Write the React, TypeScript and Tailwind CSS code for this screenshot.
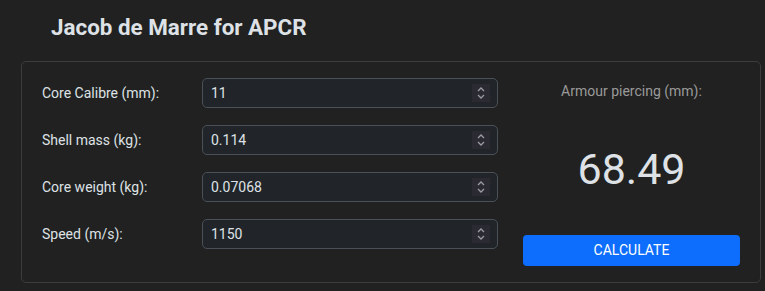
import React from "react";

const fields = [
  { label: "Core Calibre (mm):", value: "11" },
  { label: "Shell mass (kg):", value: "0.114" },
  { label: "Core weight (kg):", value: "0.07068" },
  { label: "Speed (m/s):", value: "1150" },
];

function Spinner() {
  return (
    <div className="w-[18px] h-[18px] bg-[#2b2a33] flex items-center justify-center">
      <svg width="10" height="14" viewBox="0 0 10 14" fill="none" stroke="#9b9ba1" strokeWidth="1.3">
        <path d="M2 5 L5 2 L8 5" />
        <path d="M2 9 L5 12 L8 9" />
      </svg>
    </div>
  );
}

export default function App() {
  return (
    <div
      className="w-[765px] h-[291px] bg-[#212121] text-[#dee2e6] overflow-hidden"
      style={{ fontFamily: "Roboto, 'Liberation Sans', sans-serif" }}
    >
      <div className="pl-[51px] pt-[13px] h-[61px]">
        <h1 className="text-[22.4px] font-bold leading-[28px] text-[#dee2e6]">Jacob de Marre for APCR</h1>
      </div>
      <div className="ml-[21px] w-[740px] h-[222px] border border-[#3c3c3c] rounded-[5px] px-5 pt-4 flex">
        <div className="flex flex-col gap-[17px]">
          {fields.map((f) => (
            <div key={f.label} className="flex items-center h-[30px]">
              <div className="w-[160px] text-[14px]">{f.label}</div>
              <div className="w-[296px] h-[30px] bg-[#212529] border border-[#495057] rounded-[5px] flex items-center pl-2 pr-[7px]">
                <span className="flex-1 text-[14px]">{f.value}</span>
                <Spinner />
              </div>
            </div>
          ))}
        </div>
        <div className="ml-[25px] w-[217px] flex flex-col items-center">
          <div className="mt-[3px] text-[14px] text-[#9a9a9a] leading-[20px]">Armour piercing (mm):</div>
          <div className="mt-[43px] text-[43px] leading-[50px] text-[#dee2e6]">68.49</div>
          <button className="mt-[41px] w-[217px] h-[31px] bg-[#0d6efd] text-white text-[14px] rounded-[4px]">
            CALCULATE
          </button>
        </div>
      </div>
    </div>
  );
}
